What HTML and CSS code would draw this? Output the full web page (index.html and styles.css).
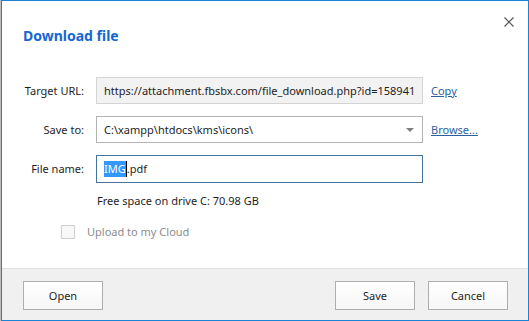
FILE: index.html
```html
<!DOCTYPE html>
<html lang="en">
<head>
  <meta charset="UTF-8">
  <meta name="viewport" content="width=device-width, initial-scale=1.0">
  <title>Download file</title>
  <link rel="stylesheet" href="styles.css">
</head>
<body>
  <div class="dialog">
    <div class="dialog-body">
      <div class="dialog-head">
        <h1 class="title">Download file</h1>
        <button class="close" aria-label="Close">
          <svg width="10" height="10" viewBox="0 0 10 10">
            <path d="M0.5 0.5 L9.5 9.5 M9.5 0.5 L0.5 9.5" stroke="#555" stroke-width="1.2" fill="none"/>
          </svg>
        </button>
      </div>

      <div class="form-grid">
        <label class="field-label" for="url">Target URL:</label>
        <input id="url" class="field readonly" type="text" readonly
               value="https://attachment.fbsbx.com/file_download.php?id=1589412786">
        <a class="link" href="#">Copy</a>

        <label class="field-label">Save to:</label>
        <div class="field select">
          <span>C:\xampp\htdocs\kms\icons\</span>
          <svg class="arrow" width="8" height="4" viewBox="0 0 8 4">
            <path d="M0 0 H8 L4 4 Z" fill="#808080"/>
          </svg>
        </div>
        <a class="link" href="#">Browse...</a>

        <label class="field-label">File name:</label>
        <div class="field focused">
          <span class="sel">IMG</span><span class="caret"></span><span>.pdf</span>
        </div>
        <span></span>
      </div>

      <p class="free-space">Free space on drive C: 70.98 GB</p>

      <label class="cloud">
        <span class="check"></span>
        <span>Upload to my Cloud</span>
      </label>
    </div>

    <div class="dialog-foot">
      <button class="btn">Open</button>
      <div class="foot-right">
        <button class="btn">Save</button>
        <button class="btn">Cancel</button>
      </div>
    </div>
  </div>
</body>
</html>
```

FILE: styles.css
```css
html, body {
  margin: 0;
  height: 100%;
}
body {
  background: #bdbdbd;
  font-family: "Noto Sans", "Open Sans", sans-serif;
  font-size: 11px;
  color: #1e1e1e;
}
.dialog {
  box-sizing: border-box;
  margin-left: 1px;
  width: 528px;
  height: 321px;
  border: 1px solid #1883d7;
  background: #fff;
  display: flex;
  flex-direction: column;
}
.dialog-body {
  flex: 1;
  position: relative;
}
.dialog-head {
  height: 76px;
}
.title {
  margin: 0;
  padding: 25px 0 0 21px;
  font-size: 14px;
  line-height: 20px;
  font-weight: bold;
  color: #1467d0;
}
.close {
  position: absolute;
  top: 16px;
  right: 14px;
  border: none;
  background: none;
  padding: 0;
  width: 10px;
  height: 10px;
  cursor: pointer;
}
.close svg {
  display: block;
}
.form-grid {
  display: grid;
  grid-template-columns: 86px 327px auto;
  grid-auto-rows: 27px;
  column-gap: 8px;
  row-gap: 12px;
  align-items: center;
}
.field-label {
  text-align: right;
  white-space: nowrap;
  padding-right: 4px;
}
.field {
  box-sizing: border-box;
  height: 27px;
  width: 327px;
  border: 1px solid #b4b4b4;
  background: #fff;
  padding: 0 7px;
  font: inherit;
  color: #1e1e1e;
  display: flex;
  align-items: center;
  white-space: nowrap;
  overflow: hidden;
}
.readonly {
  background: #f2f2f2;
  border-color: #d4d4d4;
  outline: none;
}
.select {
  justify-content: space-between;
  padding-right: 8px;
}
.arrow {
  flex: none;
}
.focused {
  border-color: #44739f;
  height: 28px;
}
.sel {
  background: #3399ff;
  color: #fff;
  line-height: 16px;
}
.caret {
  display: inline-block;
  width: 1px;
  height: 16px;
  background: #000;
}
.link {
  color: #2d5f9e;
  text-decoration: underline;
}
.free-space {
  margin: 11px 0 0 95px;
  line-height: 16px;
}
.cloud {
  display: flex;
  align-items: center;
  gap: 12px;
  margin: 15px 0 0 59px;
  color: #8c8c8c;
}
.check {
  box-sizing: border-box;
  width: 14px;
  height: 14px;
  border: 1px solid #cfcfcf;
  background: #f8f8f8;
}
.dialog-foot {
  height: 52px;
  border-top: 1px solid #dfdfdf;
  background: #f0f0f0;
  display: flex;
  align-items: flex-start;
  justify-content: space-between;
  padding: 12px 20px 0 21px;
  box-sizing: border-box;
}
.foot-right {
  display: flex;
  gap: 13px;
}
.btn {
  width: 80px;
  height: 29px;
  border: 1px solid #adadad;
  background: linear-gradient(#fff, #f6f6f6);
  font: inherit;
  color: #1e1e1e;
  cursor: pointer;
}
```
